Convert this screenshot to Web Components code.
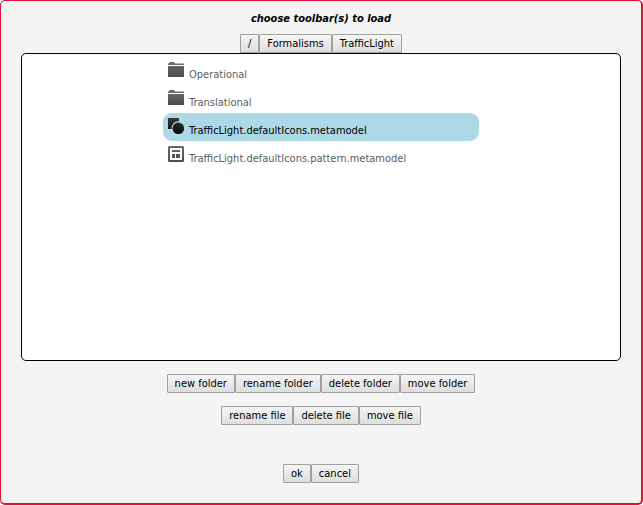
<!DOCTYPE html>
<html lang="en">
<head>
<meta charset="utf-8">
<title>choose toolbar(s) to load</title>
<style>
html, body { margin: 0; height: 100%; }
body { font: 11px/16px "DejaVu Sans Condensed", "DejaVu Sans", sans-serif; color: #000; }
</style>
</head>
<body>
<file-dialog>
  <span slot="title">choose toolbar(s) to load</span>
  <button-row slot="path" label="Current folder">
    <tool-button>/</tool-button><tool-button>Formalisms</tool-button><tool-button>TrafficLight</tool-button>
  </button-row>
  <file-list>
    <file-item kind="folder">Operational</file-item>
    <file-item kind="folder">Translational</file-item>
    <file-item kind="shapes" selected>TrafficLight.defaultIcons.metamodel</file-item>
    <file-item kind="pattern">TrafficLight.defaultIcons.pattern.metamodel</file-item>
  </file-list>
  <button-row slot="folders" label="Folder actions">
    <tool-button>new folder</tool-button><tool-button>rename folder</tool-button><tool-button>delete folder</tool-button><tool-button>move folder</tool-button>
  </button-row>
  <button-row slot="files" label="File actions">
    <tool-button>rename file</tool-button><tool-button>delete file</tool-button><tool-button>move file</tool-button>
  </button-row>
  <button-row slot="confirm" label="Dialog actions">
    <tool-button>ok</tool-button><tool-button>cancel</tool-button>
  </button-row>
</file-dialog>
<script>
class BaseElement extends HTMLElement {
  constructor() {
    super();
    this.attachShadow({ mode: 'open' });
  }
  connectedCallback() {
    this.shadowRoot.innerHTML = this.render();
  }
}

class FileDialog extends BaseElement {
  render() {
    return `<style>
      :host { display: block; min-height: 100%; box-sizing: border-box; background: #f4f4f4;
        border: solid #dc143c; border-width: 1px 2px 2px 1px; border-radius: 5px; padding: 10px 20px 20px; }
      h1 { margin: 0 0 7px; font: inherit; font-style: italic; font-weight: bold; text-align: center; }
      .actions { display: grid; gap: 13px; padding-top: 13px; }
      .confirm { padding-top: 39px; }
    </style>
    <h1><slot name="title"></slot></h1>
    <slot name="path"></slot>
    <slot></slot>
    <div class="actions"><slot name="folders"></slot><slot name="files"></slot></div>
    <div class="confirm"><slot name="confirm"></slot></div>`;
  }
}

class ButtonRow extends BaseElement {
  render() {
    return `<style>
      :host { display: block; }
      div { display: flex; justify-content: center; }
    </style>
    <div role="group" aria-label="${this.getAttribute('label')}"><slot></slot></div>`;
  }
}

class ToolButton extends BaseElement {
  render() {
    return `<style>
      :host { display: block; }
      button { display: block; height: 19px; box-sizing: border-box; margin: 0; padding: 1px 7px 0;
        border: 1px solid #a0a0a0; border-radius: 1px; font: inherit; line-height: 16px; color: #000;
        background: linear-gradient(#f5f5f5, #dedede); white-space: nowrap; }
      button:active { background: #d5d5d5; }
    </style>
    <button type="button"><slot></slot></button>`;
  }
}

class FileList extends BaseElement {
  render() {
    return `<style>
      :host { display: block; min-height: 300px; padding: 3px 0; background: #fff;
        border: 1px solid #000; border-radius: 5px; }
      div { width: 316px; max-width: 100%; margin: 0 auto; }
    </style>
    <div role="listbox" aria-label="Files"><slot></slot></div>`;
  }
}

const icons = {
  folder: '<path d="M0 3V1.5H1L1.5 0H6L7 1.5H16V3Z"/><path d="M0 4H16V15H0Z"/>',
  shapes: '<path d="M0 0H11V3.2A7 7 0 0 0 3.6 11H0Z"/><circle cx="10.3" cy="10.3" r="5.8"/>',
  pattern: '<path fill-rule="evenodd" d="M1 0H15L16 1V15L15 16H1L0 15V1ZM2 2V14H14V2Z"/><path d="M4 4H12V6H4ZM4 8H7V12H4ZM8 8H12V12H8Z"/>'
};

class FileItem extends BaseElement {
  connectedCallback() {
    super.connectedCallback();
    this.setAttribute('role', 'option');
    this.setAttribute('aria-selected', String(this.hasAttribute('selected')));
  }
  render() {
    return `<style>
      :host { display: flex; align-items: flex-start; gap: 5px; height: 28px; box-sizing: border-box;
        padding: 5px 5px 0; border-radius: 9px; color: #5d5d5d; --top: #6d6d6d; --bottom: #4b4b4b; }
      :host([selected]) { background: #add8e6; color: #000; --top: #383838; --bottom: #080808; }
      svg { width: 16px; height: 16px; flex: none; }
      span { padding-top: 5px; white-space: nowrap; }
    </style>
    <svg viewBox="0 0 16 16" aria-hidden="true">
      <defs><linearGradient id="g" gradientUnits="userSpaceOnUse" x1="0" y1="0" x2="0" y2="16">
        <stop offset="0" style="stop-color:var(--top)"/><stop offset="1" style="stop-color:var(--bottom)"/>
      </linearGradient></defs>
      <g fill="url(#g)">${icons[this.getAttribute('kind')]}</g>
    </svg>
    <span><slot></slot></span>`;
  }
}

customElements.define('file-dialog', FileDialog);
customElements.define('button-row', ButtonRow);
customElements.define('tool-button', ToolButton);
customElements.define('file-list', FileList);
customElements.define('file-item', FileItem);
</script>
</body>
</html>
